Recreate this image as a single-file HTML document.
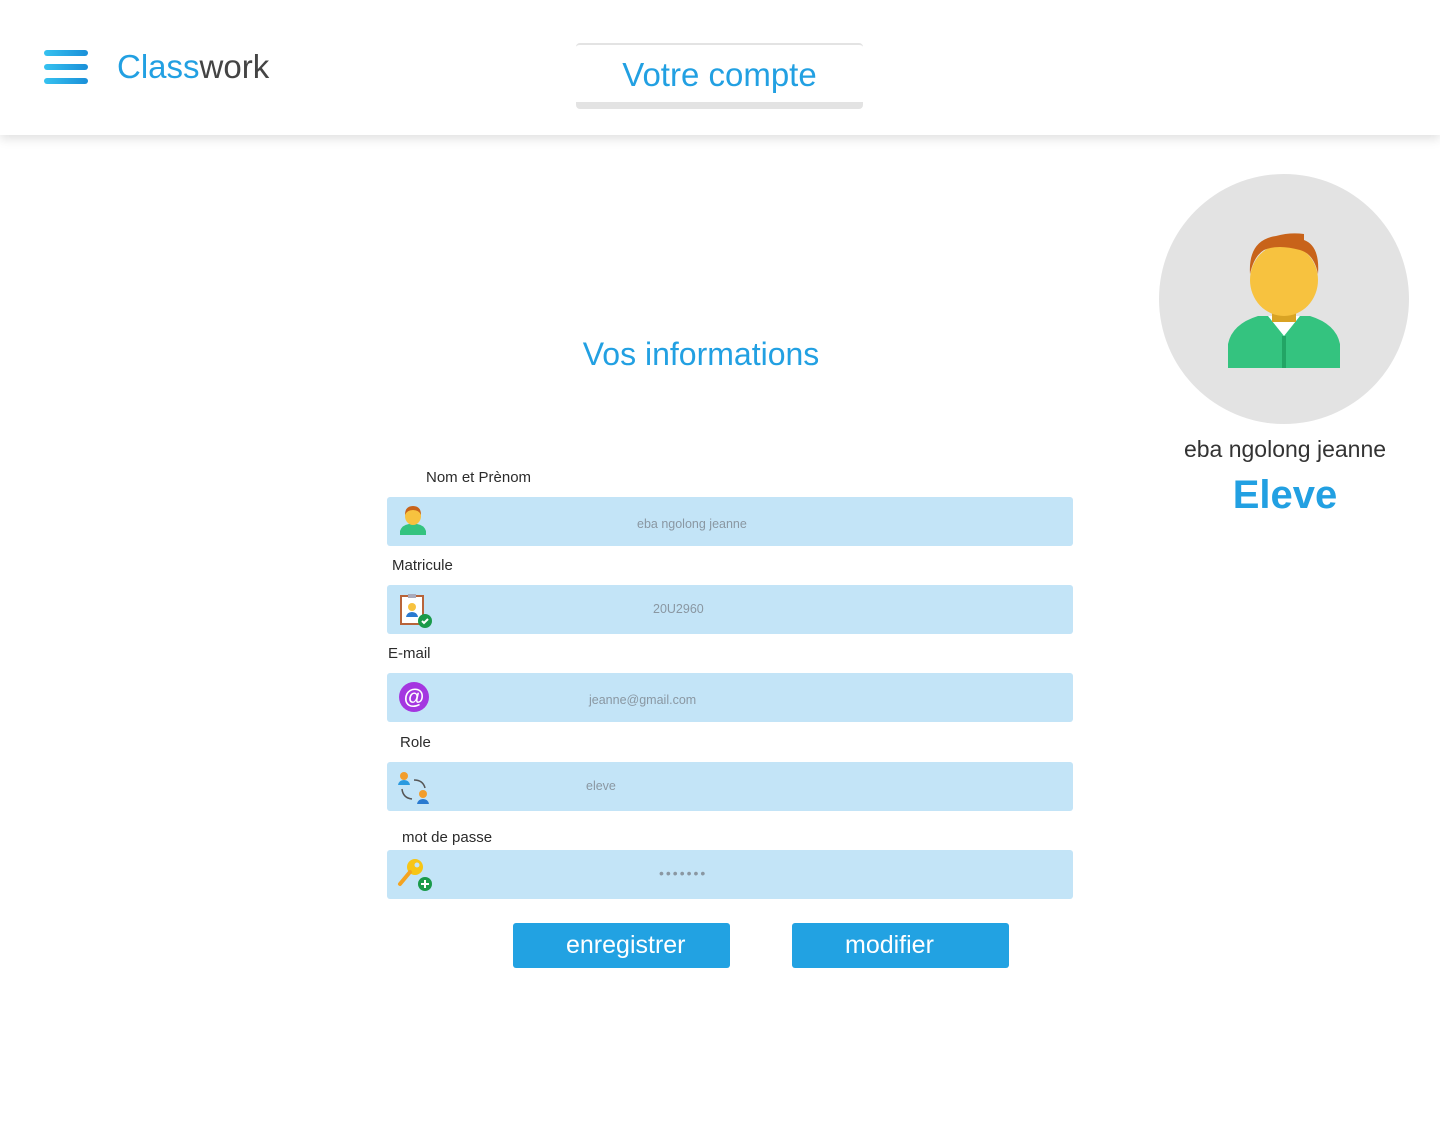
<!DOCTYPE html>
<html><head><meta charset="utf-8"><style>
*{margin:0;padding:0;box-sizing:border-box}
body{width:1440px;height:1132px;background:#fff;font-family:"Liberation Sans",sans-serif;position:relative;overflow:hidden}
.hdr{position:absolute;left:0;top:0;width:1440px;height:135px;background:#fff;box-shadow:0 4px 10px rgba(0,0,0,.12)}
.abs{position:absolute}
.blue{color:#22a0e2}
.field{position:absolute;left:387px;width:686px;height:49px;background:#c3e4f7;border-radius:3px}
.ph{position:absolute;top:3px;line-height:49px;font-size:12.5px;color:#8a97a2}
.lbl{position:absolute;font-size:15px;color:#2b2b2b}
.btn{position:absolute;top:923px;width:217px;height:45px;background:#22a2e2;border-radius:3px;color:#fff;font-size:25px;line-height:44px}
.ic{position:absolute;left:10px;top:6px}
</style></head><body>
<div class="hdr">
  <div class="abs" style="left:44px;top:50px;width:44px;height:6px;border-radius:3px;background:linear-gradient(90deg,#36c2f0,#1a8fd8)"></div>
  <div class="abs" style="left:44px;top:64px;width:44px;height:6px;border-radius:3px;background:linear-gradient(90deg,#36c2f0,#1a8fd8)"></div>
  <div class="abs" style="left:44px;top:78px;width:44px;height:6px;border-radius:3px;background:linear-gradient(90deg,#36c2f0,#1a8fd8)"></div>
  <div class="abs" style="left:117px;top:48px;font-size:33px;"><span class="blue">Class</span><span style="color:#444">work</span></div>
  <div class="abs" style="left:576px;top:43px;width:287px;height:66px;border-top:2px solid #e3e3e3;border-bottom:7px solid #e3e3e3;border-radius:4px;text-align:center;font-size:33px;line-height:60px" ><span class="blue">Votre compte</span></div>
</div>

<div class="abs blue" style="left:566px;top:336px;font-size:32px;width:270px;text-align:center">Vos informations</div>

<div class="abs" style="left:1159px;top:174px;width:250px;height:250px;border-radius:50%;background:#e3e3e3"></div>
<svg class="abs" style="left:1228px;top:232px" width="112" height="136" viewBox="0 0 112 136">
  <path d="M0 136 V112 Q4 92 30 84 H82 Q108 92 112 112 V136Z" fill="#34c37f"/>
  <path d="M56 136 V104" stroke="#22a565" stroke-width="4"/>
  <path d="M40 84 L56 104 L72 84Z" fill="#fff"/>
  <rect x="44" y="72" width="24" height="18" fill="#d9a324"/>
  <ellipse cx="56" cy="48" rx="34" ry="36" fill="#f7c23f"/>
  <path d="M22 42 Q20 8 48 4 Q62 0 76 2 L76 8 Q92 14 90 42 Q86 22 72 18 Q50 12 36 18 Q26 24 22 42Z" fill="#c8631a"/>
</svg>
<div class="abs" style="left:1150px;top:436px;width:270px;text-align:center;font-size:23px;color:#333">eba ngolong jeanne</div>
<div class="abs blue" style="left:1150px;top:473px;width:270px;text-align:center;font-size:40px;font-weight:bold">Eleve</div>

<div class="lbl" style="left:426px;top:469px">Nom et Prènom</div>
<div class="field" style="top:497px">
  <svg class="ic" width="32" height="36" viewBox="0 0 32 36"><path d="M3 32 V28 Q5 22 12 21 H20 Q27 22 29 28 V32Z" fill="#34c37f"/><ellipse cx="16" cy="13" rx="8" ry="9" fill="#f7c23f"/><path d="M8 12 Q8 3 16 3 Q24 3 24 12 Q22 7 16 7 Q10 7 8 12Z" fill="#c8631a"/></svg>
  <div class="ph" style="left:250px">eba ngolong jeanne</div>
</div>
<div class="lbl" style="left:392px;top:557px">Matricule</div>
<div class="field" style="top:585px">
  <svg class="ic" width="40" height="40" viewBox="0 0 40 40"><rect x="4" y="5" width="22" height="28" fill="#fff" stroke="#b8643a" stroke-width="2"/><rect x="11" y="3" width="8" height="4" fill="#aab"/><path d="M9 26 Q10 21 15 21 Q20 21 21 26Z" fill="#2a7ad0"/><circle cx="15" cy="16" r="4" fill="#f7c23f"/><circle cx="28" cy="30" r="7" fill="#1a9a4a"/><path d="M25 30 l2 2 4-4" stroke="#fff" stroke-width="2" fill="none"/></svg>
  <div class="ph" style="left:266px;top:0">20U2960</div>
</div>
<div class="lbl" style="left:388px;top:645px">E-mail</div>
<div class="field" style="top:673px">
  <svg class="ic" width="34" height="34" viewBox="0 0 34 34"><circle cx="17" cy="18" r="15" fill="#a436e0"/><text x="17" y="25" font-size="21" text-anchor="middle" fill="#fff" font-family="Liberation Sans" font-weight="bold">@</text></svg>
  <div class="ph" style="left:202px;top:3px">jeanne@gmail.com</div>
</div>
<div class="lbl" style="left:400px;top:734px">Role</div>
<div class="field" style="top:762px">
  <svg class="ic" width="36" height="40" viewBox="0 0 36 40"><circle cx="7" cy="8" r="4" fill="#f29d2c"/><path d="M1 17 Q2 12 7 12 Q12 12 13 17Z" fill="#2a9ae0"/><circle cx="26" cy="26" r="4" fill="#f29d2c"/><path d="M20 36 Q21 31 26 31 Q31 31 32 36Z" fill="#2a7ad0"/><path d="M17 12 Q26 12 28 20" stroke="#555" fill="none" stroke-width="1.5"/><path d="M5 21 Q6 30 15 31" stroke="#555" fill="none" stroke-width="1.5"/></svg>
  <div class="ph" style="left:199px;top:0">eleve</div>
</div>
<div class="lbl" style="left:402px;top:829px">mot de passe</div>
<div class="field" style="top:850px">
  <svg class="ic" width="40" height="40" viewBox="0 0 40 40"><circle cx="18" cy="11" r="8" fill="#f7c515"/><circle cx="20" cy="9" r="2.5" fill="#c3e4f7"/><path d="M13 16 L3 28" stroke="#f4a320" stroke-width="4" stroke-linecap="round"/><circle cx="28" cy="28" r="7" fill="#1a9a4a"/><path d="M28 24 v8 M24 28 h8" stroke="#fff" stroke-width="2"/></svg>
  <div class="ph" style="left:272px;top:-1px;letter-spacing:2px;font-size:14px">•••••••</div>
</div>

<div class="btn" style="left:513px;padding-left:53px">enregistrer</div>
<div class="btn" style="left:792px;padding-left:53px">modifier</div>
</body></html>
